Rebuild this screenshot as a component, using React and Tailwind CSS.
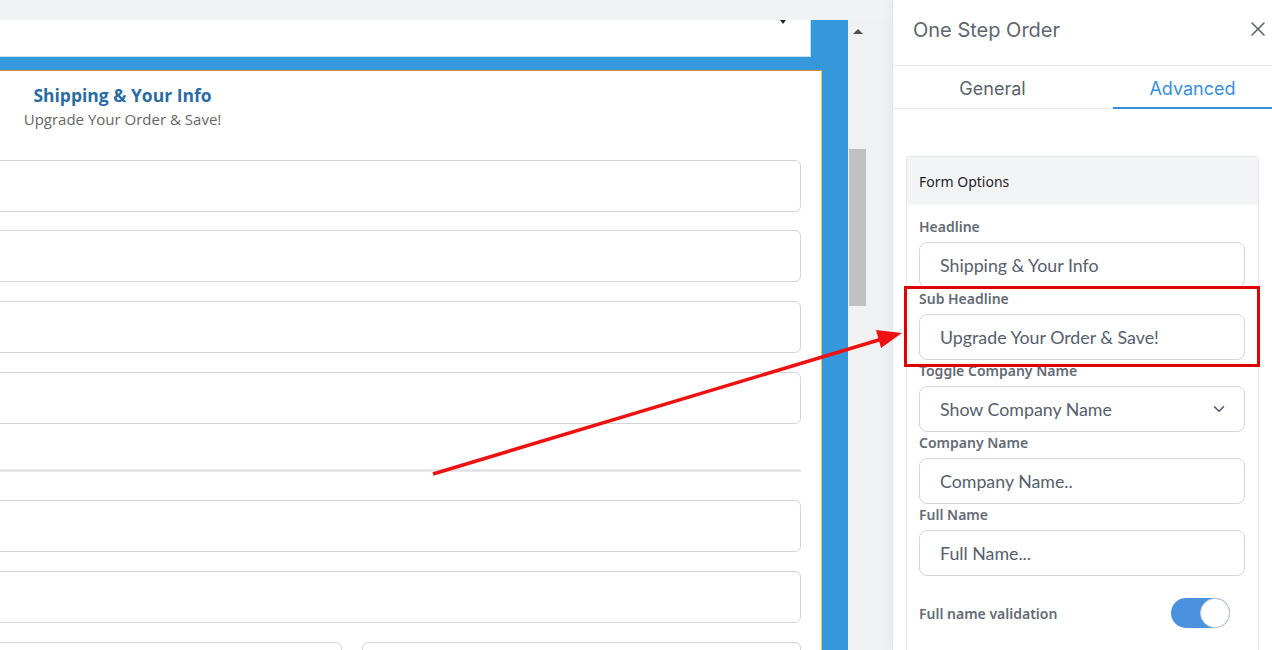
import React from "react";
import { X, ChevronDown } from "lucide-react";

function LeftInput({ className = "" }) {
  return <div className={"h-[52px] rounded-md border border-[#d4d4d8] bg-white " + className} />;
}

function Label({ children, first }) {
  return (
    <div
      className={
        "text-[14px] leading-[22px] font-semibold text-[#646b75] mb-[4px] " +
        (first ? "pt-[11px]" : "")
      }
      style={{ fontFamily: '"Noto Sans", sans-serif' }}
    >
      {children}
    </div>
  );
}

function Field({ value, children }) {
  return (
    <div
      className="h-[46px] rounded-lg border border-[#d1d5db] bg-white flex items-center pl-[20px] pr-[16px] text-[17.8px] text-[#56606c]"
      style={{ fontFamily: 'Lato, sans-serif' }}
    >
      <span className="flex-1">{value}</span>
      {children}
    </div>
  );
}

export default function App() {
  return (
    <div className="relative w-[1272px] h-[650px] overflow-hidden flex bg-[#f1f2f4]">
      {/* Left editor area */}
      <div className="w-[892px] flex flex-col shrink-0">
        <div className="h-[20px] shrink-0" />
        <div className="flex flex-1 min-h-0">
          {/* Canvas */}
          <div className="w-[848px] bg-[#3598db] flex flex-col overflow-hidden">
            <div className="w-[811px] h-[37px] bg-white border-b border-r border-[#c6dcef] flex justify-end pr-[24px] shrink-0">
              <div className="w-0 h-0 border-l-[3px] border-r-[3px] border-t-[4px] border-l-transparent border-r-transparent border-t-[#222]" />
            </div>
            <div className="h-[13px] shrink-0" />
            <div className="w-[822px] flex-1 bg-white border-t border-r border-t-[#e0893a] border-r-[#f0c44c] pr-[20px]">
              <div className="w-[245px] text-center pt-[12px]" style={{ fontFamily: '"Open Sans", sans-serif' }}>
                <div className="text-[17.5px] leading-[24px] font-bold text-[#2b6ca3]">Shipping &amp; Your Info</div>
                <div className="text-[15px] leading-[24px] text-[#666]">Upgrade Your Order &amp; Save!</div>
              </div>
              <div className="ml-[-10px] mt-[29px] flex flex-col">
                <LeftInput />
                <LeftInput className="mt-[18px]" />
                <LeftInput className="mt-[19px]" />
                <LeftInput className="mt-[19px]" />
                <div className="h-[3px] bg-[#e5e6e9] mt-[45px]" />
                <LeftInput className="mt-[28px]" />
                <LeftInput className="mt-[19px]" />
                <div className="flex gap-[20px] mt-[19px]">
                  <LeftInput className="w-[352px]" />
                  <LeftInput className="flex-1" />
                </div>
              </div>
            </div>
          </div>
          {/* Scrollbar */}
          <div className="w-[19px] bg-[#f1f1f1] flex flex-col items-center">
            <div className="mt-[9px] w-0 h-0 border-l-[5px] border-r-[5px] border-b-[5px] border-l-transparent border-r-transparent border-b-[#505050]" />
            <div className="mt-[115px] w-[17px] h-[157px] bg-[#c1c1c1]" />
          </div>
          <div className="flex-1 bg-[#f0f1f3]" />
        </div>
      </div>

      {/* Right panel */}
      <div className="flex-1 bg-white border-l border-[#e3e5e8] flex flex-col shadow-[-4px_0_8px_rgba(0,0,0,0.03)]">
        <div className="h-[66px] border-b border-[#e5e7eb] flex items-center pl-[20px] pr-[2px] shrink-0">
          <div className="flex-1 text-[20px] text-[#5f6670] pb-[6px]" style={{ fontFamily: 'Inter, sans-serif' }}>
            One Step Order
          </div>
          <X size={24} strokeWidth={1.6} className="text-[#5f6670] mb-[8px]" />
        </div>
        <div className="h-[43px] border-b border-[#e5e7eb] flex shrink-0 text-[18px]" style={{ fontFamily: 'Inter, sans-serif' }}>
          <div className="w-[199px] flex items-center justify-center pt-[3px] text-[#5b636d]">General</div>
          <div className="ml-auto w-[159px] flex items-center justify-center pt-[3px] text-[#3a8fd9] border-b-2 border-[#3a8fd9] mb-[-1px]">
            Advanced
          </div>
        </div>
        <div className="pt-[47px] pl-[13px] pr-[13px]">
          <div className="w-[353px] border border-[#e3e5e8] rounded-[3px]">
            <div
              className="h-[48px] bg-[#f3f4f6] flex items-center pl-[12px] text-[14px] text-[#1f2329]"
              style={{ fontFamily: '"Noto Sans", sans-serif' }}
            >
              Form Options
            </div>
            <div className="px-[12px] pb-[40px]">
              <div className="w-[326px]">
                <Label first>Headline</Label>
                <Field value="Shipping & Your Info" />
                <Label>Sub Headline</Label>
                <Field value="Upgrade Your Order & Save!" />
                <Label>Toggle Company Name</Label>
                <Field value="Show Company Name">
                  <ChevronDown size={18} strokeWidth={2} className="text-[#4b5563]" />
                </Field>
                <Label>Company Name</Label>
                <Field value="Company Name.." />
                <Label>Full Name</Label>
                <Field value="Full Name..." />
                <div className="mt-[22px] h-[30px] flex items-center">
                  <div
                    className="flex-1 text-[14px] font-semibold text-[#646b75]"
                    style={{ fontFamily: '"Noto Sans", sans-serif' }}
                  >
                    Full name validation
                  </div>
                  <div className="mr-[15px] w-[59px] h-[30px] rounded-full bg-[#4a92de] flex items-center justify-end">
                    <div className="w-[30px] h-[30px] rounded-full bg-white border border-[#c8ccd2]" />
                  </div>
                </div>
              </div>
            </div>
          </div>
        </div>
      </div>

      {/* Annotation: red box */}
      <div className="absolute left-[904px] top-[286px] w-[356px] h-[81px] border-[3px] border-[#e00000] pointer-events-none" />
      {/* Annotation: arrow */}
      <svg className="absolute left-0 top-0 pointer-events-none" width="1272" height="650" viewBox="0 0 1272 650">
        <line x1="433" y1="474" x2="882" y2="339" stroke="#ee1111" strokeWidth="3.5" />
        <polygon points="902,333 881,348 876,330" fill="#ee1111" />
      </svg>
    </div>
  );
}
